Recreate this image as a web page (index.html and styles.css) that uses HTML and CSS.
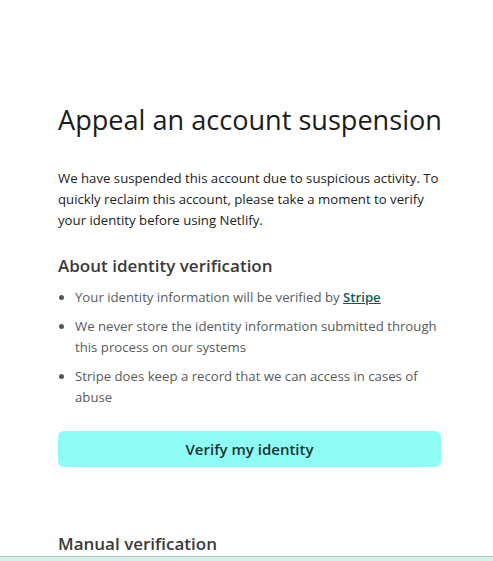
FILE: index.html
```html
<!DOCTYPE html>
<html lang="en">
<head>
<meta charset="utf-8">
<title>Appeal an account suspension</title>
<link rel="stylesheet" href="styles.css">
</head>
<body>
<main class="page">
  <section class="card">
    <h1 class="title">Appeal an account suspension</h1>
    <p class="lead">We have suspended this account due to suspicious activity. To quickly reclaim this account, please take a moment to verify your identity before using Netlify.</p>
    <h2 class="subtitle">About identity verification</h2>
    <ul class="points">
      <li>Your identity information will be verified by <a class="link" href="#">Stripe</a></li>
      <li>We never store the identity information submitted through this process on our systems</li>
      <li>Stripe does keep a record that we can access in cases of abuse</li>
    </ul>
    <button class="verify" type="button">Verify my identity</button>
    <h2 class="subtitle manual">Manual verification</h2>
  </section>
</main>
<footer class="bottom-bar"></footer>
</body>
</html>
```
FILE: styles.css
```css
html, body {
  margin: 0;
  padding: 0;
  height: 100%;
  overflow: hidden;
}
body {
  background: #ffffff;
  font-family: "Open Sans", "Noto Sans", sans-serif;
  color: #222222;
  display: flex;
  flex-direction: column;
}
.page {
  flex: 1;
  min-height: 0;
  overflow: hidden;
  padding: 100px 52px 0 58px;
}
.card {
  width: 383px;
}
.title {
  margin: 0;
  font-size: 27.1px;
  font-weight: 400;
  line-height: 40px;
  color: #1c1c1c;
  white-space: nowrap;
}
.lead {
  margin: 28px 0 0;
  font-size: 13.2px;
  line-height: 21px;
  color: #222222;
}
.subtitle {
  margin: 22px 0 0;
  font-size: 17px;
  font-weight: 600;
  line-height: 26px;
  color: #3a3a3a;
}
.points {
  margin: 8px 0 0;
  padding: 0 0 0 17px;
  font-size: 13.2px;
  line-height: 21px;
  color: #5a5a5a;
}
.points li {
  margin-bottom: 8px;
}
.points li::marker {
  color: #555555;
}
.link {
  color: #0f5a55;
  font-weight: 600;
  text-decoration: underline;
}
.verify {
  display: block;
  width: 100%;
  height: 36px;
  margin-top: 23px;
  border: none;
  border-radius: 6px;
  background: #8efcf4;
  font-family: inherit;
  font-size: 15px;
  font-weight: 600;
  color: #1d3436;
  cursor: pointer;
}
.manual {
  margin-top: 64px;
}
.bottom-bar {
  flex: 0 0 auto;
  height: 4px;
  border-top: 1px solid #b3c2bf;
  background: #d6efe9;
}
```
